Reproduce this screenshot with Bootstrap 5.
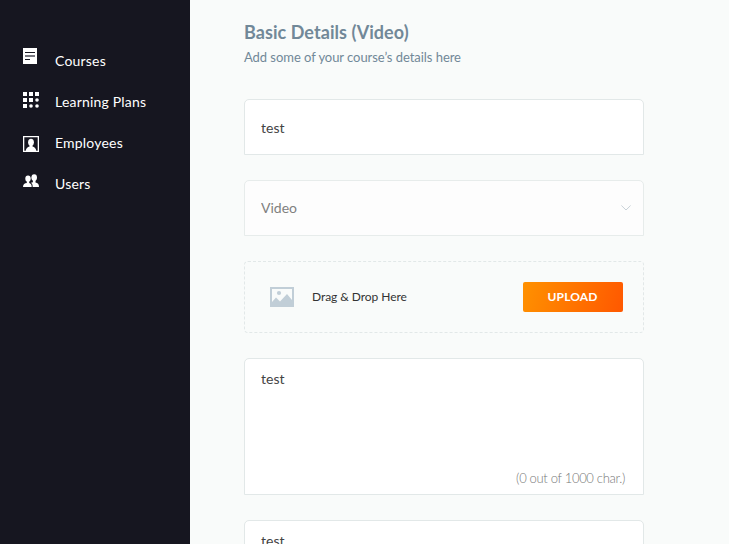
<!DOCTYPE html>
<html lang="en">
<head>
<meta charset="utf-8">
<meta name="viewport" content="width=device-width, initial-scale=1">
<title>Course details</title>
<link href="https://cdn.jsdelivr.net/npm/bootstrap@5.3.0/dist/css/bootstrap.min.css" rel="stylesheet">
<style>
body { font-family: Lato, sans-serif; background: #f9fbfa; color: #333; }
.side { width: 190px; background: #161620; padding-top: 40px; }
.side .nav-link { height: 41px; padding: 0 0 0 23px; color: #fff; font-size: 14px; line-height: 41px; letter-spacing: .2px; }
.side svg { width: 16px; margin-right: 16px; flex: none; }
.side .up-5 { margin-top: -10px; }
.side .up-2 { margin-top: -4px; }
.side .down-1 { margin-top: 2px; }
.side .up-3 { margin-top: -5px; }
.editor { padding: 20px 0 0 54px; }
.editor form { width: 400px; gap: 25px; margin-top: 30px; }
.title { font-size: 18px; line-height: 24px; font-weight: 700; letter-spacing: .06px; color: #718898; }
.subtitle { font-size: 13px; line-height: 24px; padding-top: 1px; letter-spacing: -.05px; color: #718898; }
.editor .form-control, .editor .form-select { border: 1px solid #e2e8e8; border-radius: 5px 5px 0 0; font-size: 14px; color: #444; padding: 0 16px; height: 56px; box-shadow: none; background-color: #fff; }
.editor .form-control { padding-top: 0; }
.editor .form-select { background: #fdfdfd; color: #808080; border-color: #e7eceb; opacity: 1; padding-bottom: 2px; }
.chevron { right: 13px; top: 25px; }
.editor textarea.form-control { height: 137px; padding-top: 9px; resize: none; overflow: hidden; display: block; }
.counter { right: 19px; bottom: 9px; font-size: 13px; line-height: 16px; letter-spacing: -.31px; color: #777; font-weight: 300; }
.drop { height: 72px; border: 1px dashed #e2e8e8; border-radius: 4px; padding: 0 20px 0 25px; font-size: 12px; }
.drop-label { margin-left: 18px; letter-spacing: -.05px; }
.upload { width: 100px; height: 30px; padding: 0 1px 0 0; border: 0; border-radius: 2px; font-size: 12px; font-weight: 700; letter-spacing: .1px; color: #fff; background: linear-gradient(105deg, #ff9100, #ff5800); }
</style>
</head>
<body class="vh-100 overflow-hidden d-flex">
<aside class="side vh-100 flex-shrink-0">
  <nav class="nav flex-column">
    <a class="nav-link d-flex align-items-center" href="#"><svg class="up-5" height="16" viewBox="0 0 16 16"><path fill="#fff" d="M0 0h14v16H0z"/><path stroke="#171721" d="M2 4.5h10M2 11.5h5"/><path stroke="#777780" stroke-width="2" d="M2 8h10"/></svg>Courses</a>
    <a class="nav-link d-flex align-items-center" href="#"><svg class="up-2" height="16" viewBox="0 0 16 16" fill="#fff"><path d="M0 0h4v4H0zM6 0h4v4H6zM12 0h4v4h-4zM0 6h4v4H0zM6 6h4v4H6zM0 12h4v4H0z"/><circle cx="14" cy="8" r="1.8"/><circle cx="8" cy="14" r="1.8"/><circle cx="14" cy="14" r="1.8"/></svg>Learning Plans</a>
    <a class="nav-link d-flex align-items-center" href="#"><svg class="down-1" height="16" viewBox="0 0 16 16" fill="#fff"><path fill-rule="evenodd" d="M0 0h16v16H0zM1.3 1.3v13.4h13.4V1.3z"/><ellipse cx="8" cy="6.3" rx="2.9" ry="3.5"/><path d="M6.5 9h3v1.5c2 .4 3.5 1.8 3.8 4.5H2.7c.3-2.7 1.8-4.1 3.8-4.5z"/></svg>Employees</a>
    <a class="nav-link d-flex align-items-center" href="#"><svg class="up-3" height="14" viewBox="0 0 16 14" fill="#fff"><ellipse cx="5" cy="4.6" rx="2.7" ry="3.2"/><path d="M3.8 7h2.4v2c1.6.4 2.5 1.4 2.5 4H0c0-2.8 1.7-3.7 3.8-4z"/><ellipse cx="11.2" cy="3.6" rx="2.8" ry="3.4"/><path d="M9.9 6h2.6v2.5c2.2.5 3.5 1.3 3.5 4.5H9.7c0-2.3-.6-3.5-1.7-4.2.5-.4 1.1-.5 1.9-.6z"/></svg>Users</a>
  </nav>
</aside>
<main class="editor flex-grow-1">
  <h1 class="title mb-0">Basic Details (Video)</h1>
  <p class="subtitle mb-0">Add some of your course’s details here</p>
  <form class="d-flex flex-column">
    <input class="form-control" type="text" value="test" aria-label="Name">
    <div class="position-relative">
      <select class="form-select" aria-label="Type" disabled><option>Video</option></select>
      <svg class="chevron position-absolute" width="10" height="6" viewBox="0 0 10 6" fill="none" stroke="#c9d2d8"><path d="M.4.5 5 5 9.6.5"/></svg>
    </div>
    <div class="drop d-flex align-items-center">
      <svg width="24" height="20" viewBox="0 0 24 20"><path fill="#c1ced7" fill-rule="evenodd" d="M0 0h24v20H0zM2 2v13l4-4.5 4 4L17 7l5 6V2z"/><circle cx="9" cy="6" r="2.1" fill="#c1ced7"/></svg>
      <span class="drop-label">Drag &amp; Drop Here</span>
      <button class="btn upload ms-auto" type="button">UPLOAD</button>
    </div>
    <div class="position-relative">
      <textarea class="form-control" aria-label="Description">test</textarea>
      <span class="counter position-absolute">(0 out of 1000 char.)</span>
    </div>
    <textarea class="form-control" aria-label="Summary">test</textarea>
  </form>
</main>
<script src="https://cdn.jsdelivr.net/npm/bootstrap@5.3.0/dist/js/bootstrap.bundle.min.js"></script>
</body>
</html>
